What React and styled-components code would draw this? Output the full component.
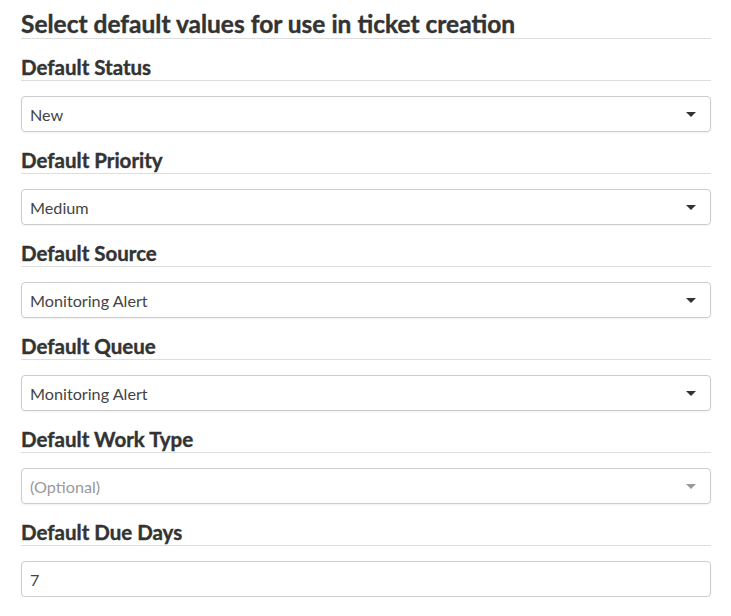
import React from 'react';
import styled, { createGlobalStyle } from 'styled-components';

const GlobalStyle = createGlobalStyle`
    body {
        margin: 0;
        background: #ffffff;
        font-family: Lato, "Open Sans", sans-serif;
        color: #333333;
    }
`;

const Page = styled.div`
    width: 690px;
    padding: 10px 20px 0 21px;
`;

const Title = styled.h2`
    margin: 0;
    font-size: 24.5px;
    line-height: 28px;
    font-weight: 700;
    color: #333333;
    -webkit-text-stroke: 0.4px #333333;
    border-bottom: 1px solid #dddddd;
`;

const Section = styled.div`
    display: flex;
    flex-direction: column;
    margin-top: 17px;
`;

const Heading = styled.h3`
    margin: 0;
    font-size: 20.5px;
    line-height: 23px;
    font-weight: 700;
    color: #333333;
    -webkit-text-stroke: 0.4px #333333;
    padding-bottom: 1px;
    border-bottom: 1px solid #dddddd;
`;

const Field = styled.div`
    margin-top: 15px;
    height: 36px;
    box-sizing: border-box;
    border: 1px solid #cccccc;
    border-radius: 4px;
    box-shadow: 0 1px 2px rgba(0, 0, 0, 0.06);
    display: flex;
    align-items: center;
    padding: 0 8px;
    font-size: 16.2px;
    color: ${({ muted }) => (muted ? '#999999' : '#444444')};
`;

const Value = styled.span`
    flex: 1;
`;

const Caret = styled.span`
    width: 0;
    height: 0;
    margin-right: 6px;
    border-left: 5px solid transparent;
    border-right: 5px solid transparent;
    border-top: 5px solid ${({ muted }) => (muted ? '#999999' : '#333333')};
`;

const fields = [
    { label: 'Default Status', value: 'New' },
    { label: 'Default Priority', value: 'Medium' },
    { label: 'Default Source', value: 'Monitoring Alert' },
    { label: 'Default Queue', value: 'Monitoring Alert' },
    { label: 'Default Work Type', value: '(Optional)', muted: true },
];

const App = () => {
    return (
        <>
            <GlobalStyle />
            <Page>
                <Title>Select default values for use in ticket creation</Title>
                {fields.map((f) => (
                    <Section key={f.label}>
                        <Heading>{f.label}</Heading>
                        <Field muted={f.muted}>
                            <Value>{f.value}</Value>
                            <Caret muted={f.muted} />
                        </Field>
                    </Section>
                ))}
                <Section>
                    <Heading>Default Due Days</Heading>
                    <Field>
                        <Value>7</Value>
                    </Field>
                </Section>
            </Page>
        </>
    );
};

export default App;
